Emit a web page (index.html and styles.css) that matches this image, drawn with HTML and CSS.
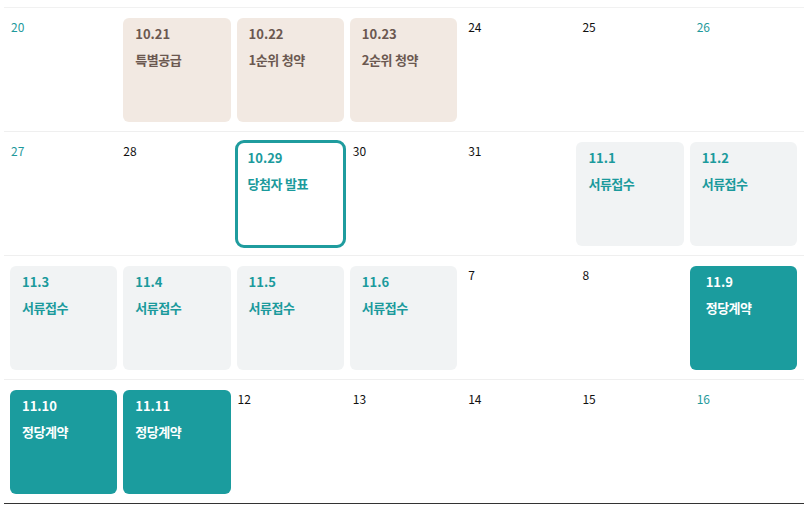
FILE: index.html
```html
<!DOCTYPE html>
<html lang="ko">
<head>
<meta charset="utf-8">
<title>청약 일정</title>
<link rel="stylesheet" href="styles.css">
</head>
<body>
<div class="calendar">
  <div class="week">
    <div class="day holiday"><span class="num">20</span></div>
    <div class="event event--beige"><div class="event-date">10.21</div><div class="event-name">특별공급</div></div>
    <div class="event event--beige"><div class="event-date">10.22</div><div class="event-name">1순위 청약</div></div>
    <div class="event event--beige"><div class="event-date">10.23</div><div class="event-name">2순위 청약</div></div>
    <div class="day"><span class="num">24</span></div>
    <div class="day"><span class="num">25</span></div>
    <div class="day holiday"><span class="num">26</span></div>
  </div>
  <div class="week">
    <div class="day holiday"><span class="num">27</span></div>
    <div class="day"><span class="num">28</span></div>
    <div class="event event--outline"><div class="event-date">10.29</div><div class="event-name">당첨자 발표</div></div>
    <div class="day"><span class="num">30</span></div>
    <div class="day"><span class="num">31</span></div>
    <div class="event event--grey"><div class="event-date">11.1</div><div class="event-name">서류접수</div></div>
    <div class="event event--grey"><div class="event-date">11.2</div><div class="event-name">서류접수</div></div>
  </div>
  <div class="week">
    <div class="event event--grey"><div class="event-date">11.3</div><div class="event-name">서류접수</div></div>
    <div class="event event--grey"><div class="event-date">11.4</div><div class="event-name">서류접수</div></div>
    <div class="event event--grey"><div class="event-date">11.5</div><div class="event-name">서류접수</div></div>
    <div class="event event--grey"><div class="event-date">11.6</div><div class="event-name">서류접수</div></div>
    <div class="day"><span class="num">7</span></div>
    <div class="day"><span class="num">8</span></div>
    <div class="event event--teal event--wide"><div class="event-date">11.9</div><div class="event-name">정당계약</div></div>
  </div>
  <div class="week">
    <div class="event event--teal"><div class="event-date">11.10</div><div class="event-name">정당계약</div></div>
    <div class="event event--teal"><div class="event-date">11.11</div><div class="event-name">정당계약</div></div>
    <div class="day"><span class="num">12</span></div>
    <div class="day"><span class="num">13</span></div>
    <div class="day"><span class="num">14</span></div>
    <div class="day"><span class="num">15</span></div>
    <div class="day holiday"><span class="num">16</span></div>
  </div>
</div>
</body>
</html>
```

FILE: styles.css
```css
* { box-sizing: border-box; }

html, body {
  margin: 0;
  padding: 0;
  background: #ffffff;
}

body {
  font-family: "Noto Sans CJK KR", "Noto Sans", sans-serif;
  color: #111111;
}

.calendar {
  width: 800px;
  margin: 7px 0 0 4px;
  border-top: 1px solid #f1f1f1;
  border-bottom: 1px solid #333333;
}

.week {
  height: 124px;
  display: grid;
  grid-template-columns: repeat(7, 1fr);
  column-gap: 6px;
  align-items: center;
  padding: 0 7px 0 6px;
  border-bottom: 1px solid #efefef;
}

.week:last-child {
  border-bottom: none;
  height: 123px;
}

.day {
  height: 104px;
  font-size: 12px;
  line-height: 18px;
  color: #111111;
}

.day:nth-child(1) { padding-left: 1px; }
.day:nth-child(2) { padding-left: 0; }
.day:nth-child(3) { padding-left: 1px; }
.day:nth-child(4) { padding-left: 3px; }
.day:nth-child(5) { padding-left: 5px; }
.day:nth-child(6) { padding-left: 6px; }
.day:nth-child(7) { padding-left: 7px; }

.day.holiday { color: #1f9a9c; }

.event {
  height: 104px;
  border-radius: 6px;
  padding: 6px 10px 0 12px;
}

.event-date {
  font-size: 13px;
  line-height: 20px;
  font-weight: 700;
  margin-bottom: 6px;
}

.event-name {
  font-size: 13px;
  line-height: 20px;
  font-weight: 700;
  letter-spacing: -0.5px;
  white-space: nowrap;
}

.event--beige {
  background: #f2e9e2;
  color: #6b5850;
}

.event--grey {
  background: #f1f3f4;
  color: #1b9a9c;
}

.event--teal {
  background: #1b9c9e;
  color: #ffffff;
}

.event--wide { padding-left: 16px; }

.event--outline {
  background: #ffffff;
  color: #1b9a9c;
  border-radius: 7px;
  outline: 3px solid #1f9c9e;
  outline-offset: -1px;
  padding-left: 11px;
}
```
